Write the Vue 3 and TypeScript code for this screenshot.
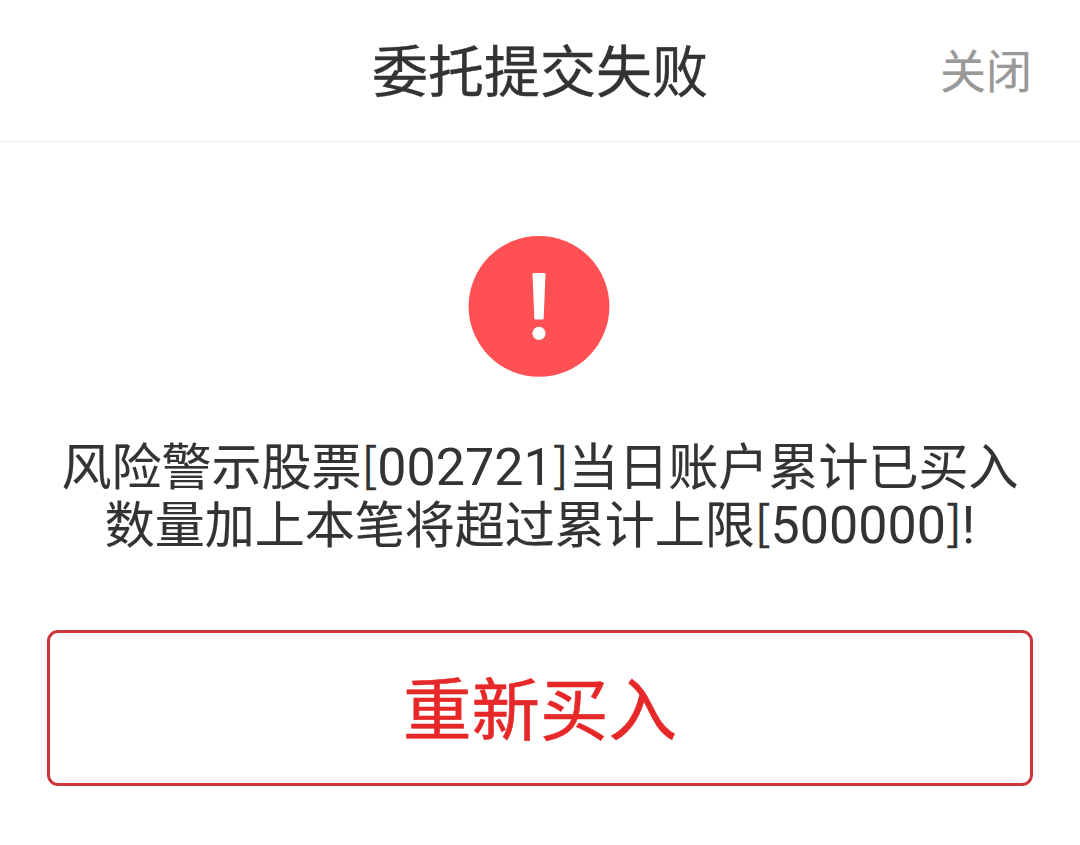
<script setup lang="ts">
interface Part {
  text: string
  kind: 'han' | 'digits' | 'bracket'
}

const title: string = '委托提交失败'
const lines: Part[][] = [
  [
    { text: '风险警示股票', kind: 'han' },
    { text: '[', kind: 'bracket' },
    { text: '002721', kind: 'digits' },
    { text: ']', kind: 'bracket' },
    { text: '当日账户累计已买入', kind: 'han' },
  ],
  [
    { text: '数量加上本笔将超过累计上限', kind: 'han' },
    { text: '[', kind: 'bracket' },
    { text: '500000', kind: 'digits' },
    { text: ']', kind: 'bracket' },
    { text: '!', kind: 'digits' },
  ],
]
</script>

<template>
  <main class="page">
    <header class="bar">
      <span></span>
      <h1>{{ title }}</h1>
      <button class="close" type="button">关闭</button>
    </header>
    <svg class="alert" viewBox="0 0 142 142" aria-hidden="true">
      <circle cx="71" cy="71.4" r="70.4" fill="#ff5153" />
      <path d="M65.5 38H76.5Q77.5 38 77.5 39L75.7 83Q75.6 84.5 74.5 84.5H67.5Q66.4 84.5 66.3 83L64.5 39Q64.5 38 65.5 38Z" fill="#fff" />
      <circle cx="71" cy="98.3" r="6.6" fill="#fff" />
    </svg>
    <div class="message">
      <p v-for="(line, i) in lines" :key="i">
        <span v-for="(part, j) in line" :key="j" :class="part.kind">{{ part.text }}</span>
      </p>
    </div>
    <button class="retry" type="button">重新买入</button>
  </main>
</template>

<style>
body { background: #fff; }
</style>
<style scoped>
.page {
  height: 845px;
  box-sizing: border-box;
  overflow: hidden;
  background: #fff;
  color: #333;
  font-family: "Noto Sans CJK SC", sans-serif;
  display: flex;
  flex-direction: column;
}
.bar {
  height: 142px;
  box-sizing: border-box;
  border-bottom: 1px solid #ebebeb;
  display: grid;
  grid-template-columns: 1fr auto 1fr;
  align-items: start;
  padding: 0 48px;
}
h1 {
  margin: 0;
  font-size: 56px;
  font-weight: 400;
  line-height: 136px;
  -webkit-text-stroke: 0.4px currentColor;
}
button { font-family: inherit; background: none; border: 0; padding: 0; }
.close {
  justify-self: end;
  font-size: 46px;
  color: #999;
  line-height: 137px;
  -webkit-text-stroke: 0.2px currentColor;
}
.alert { width: 142px; height: 142px; align-self: center; margin-top: 93px; margin-right: 2px; }
.message {
  height: 116px;
  margin-top: 57px;
  text-align: center;
  font-size: 50px;
  line-height: 58px;
}
.message p { margin: 0; height: 58px; white-space: nowrap; }
.han { -webkit-text-stroke: 0.15px currentColor; }
.digits { font-family: Roboto, sans-serif; font-size: 52px; line-height: 0; }
.bracket { font-size: 47px; line-height: 0; vertical-align: 3px; -webkit-text-stroke: 0.3px currentColor; }
.retry {
  margin: 80px 47px 0;
  height: 156px;
  box-sizing: border-box;
  border: 3px solid #cc3639;
  border-radius: 11px;
  color: #e62828;
  font-size: 68.5px;
  line-height: 146px;
  padding-bottom: 4px;
  -webkit-text-stroke: 0.6px currentColor;
}
</style>
